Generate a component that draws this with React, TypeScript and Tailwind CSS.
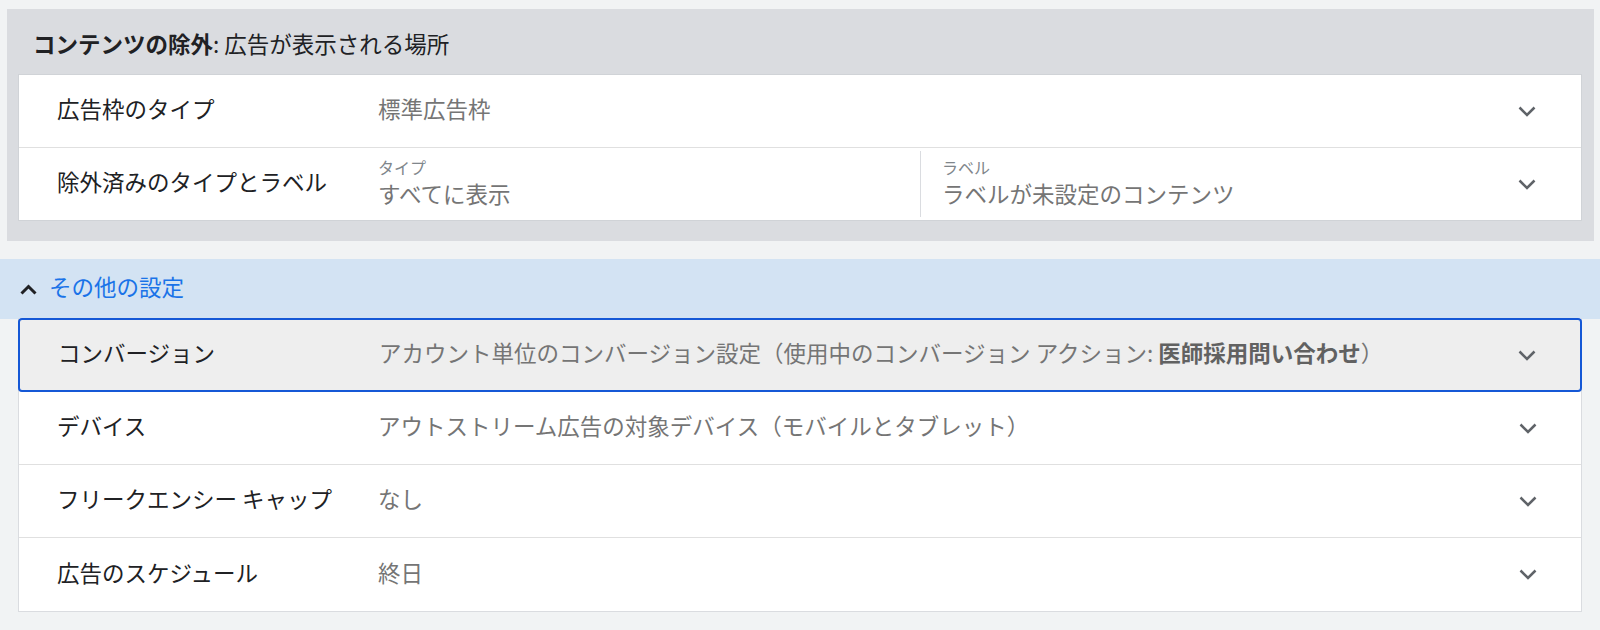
const Chevron = () => (
  <svg width="18" height="11" viewBox="0 0 18 11" fill="none" className="shrink-0">
    <path d="M1.5 1.5 L9 9 L16.5 1.5" stroke="#5f6368" strokeWidth="2.5" />
  </svg>
);

const CaretUp = () => (
  <svg width="17" height="11" viewBox="0 0 17 11" fill="none" className="shrink-0">
    <path d="M1.5 9.5 L8.5 2.5 L15.5 9.5" stroke="#202124" strokeWidth="3" />
  </svg>
);

type RowProps = {
  label: string;
  children: React.ReactNode;
  active?: boolean;
  last?: boolean;
};

const Row = ({ label, children, active, last }: RowProps) => (
  <div
    className={
      active
        ? "flex h-[74px] items-center pb-[4px] -mx-px -mt-px border-2 border-[#1558d6] rounded-[4px] bg-[#eeeeee]"
        : last
        ? "flex h-[73px] items-center pb-[4px]"
        : "flex h-[73px] items-center pb-[4px] border-b border-[#e0e0e0]"
    }
  >
    <div className="w-[359px] shrink-0 pl-[38px] text-[22.5px] text-[#202124]">{label}</div>
    <div className="flex-1 min-w-0 text-[22.5px] text-[#757575] whitespace-nowrap">{children}</div>
    <div className="pr-[44px] pl-4 pt-[4px]">
      <Chevron />
    </div>
  </div>
);

export default function App() {
  return (
    <div className="min-h-[630px] bg-[#f1f3f4] pt-[9px] font-['Noto_Sans_CJK_JP','Noto_Sans',sans-serif]">
      {/* content exclusion panel */}
      <div className="ml-[7px] mr-[6px] bg-[#dadce0] pl-[11px] pr-[12px] pb-[20px]">
        <div className="flex h-[65px] items-center pt-[4px] pl-[15px] text-[22.5px] text-[#202124]">
          <span className="font-bold">コンテンツの除外</span>
          <span>: 広告が表示される場所</span>
        </div>
        <div className="bg-white border border-[#d0d3d7]">
          <div className="flex h-[73px] items-center pb-[4px] border-b border-[#e0e0e0]">
            <div className="w-[359px] shrink-0 pl-[38px] text-[22.5px] text-[#202124]">広告枠のタイプ</div>
            <div className="flex-1 text-[22.5px] text-[#757575]">標準広告枠</div>
            <div className="pr-[45px] pl-4 pt-[4px]">
              <Chevron />
            </div>
          </div>
          <div className="flex h-[72px] items-center">
            <div className="w-[359px] shrink-0 pl-[38px] pb-[4px] text-[22.5px] text-[#202124]">除外済みのタイプとラベル</div>
            <div className="flex flex-1 self-stretch py-[3px]">
              <div className="w-[543px] shrink-0 border-r border-[#dadce0] flex flex-col justify-center pb-[3px]">
                <div className="text-[16px] leading-[20px] text-[#80868b]">タイプ</div>
                <div className="text-[22.5px] leading-[32px] text-[#757575]">すべてに表示</div>
              </div>
              <div className="flex-1 pl-[21px] flex flex-col justify-center pb-[3px]">
                <div className="text-[16px] leading-[20px] text-[#80868b]">ラベル</div>
                <div className="text-[22.5px] leading-[32px] text-[#757575]">ラベルが未設定のコンテンツ</div>
              </div>
            </div>
            <div className="pr-[45px] pl-4">
              <Chevron />
            </div>
          </div>
        </div>
      </div>

      {/* other settings */}
      <div className="mt-[18px] flex h-[60px] items-center gap-[12px] bg-[#d3e3f3] pl-[20px]">
        <CaretUp />
        <span className="pb-[4px] text-[22.5px] text-[#1a73e8]">その他の設定</span>
      </div>

      <div className="mx-[18px] bg-white border border-[#dadce0] border-t-0">
        <Row label="コンバージョン" active>
          アカウント単位のコンバージョン設定（使用中のコンバージョン アクション:{" "}
          <span className="font-bold text-[#616161]">医師採用問い合わせ</span>）
        </Row>
        <Row label="デバイス">アウトストリーム広告の対象デバイス（モバイルとタブレット）</Row>
        <Row label="フリークエンシー キャップ">なし</Row>
        <Row label="広告のスケジュール" last>
          終日
        </Row>
      </div>
    </div>
  );
}
